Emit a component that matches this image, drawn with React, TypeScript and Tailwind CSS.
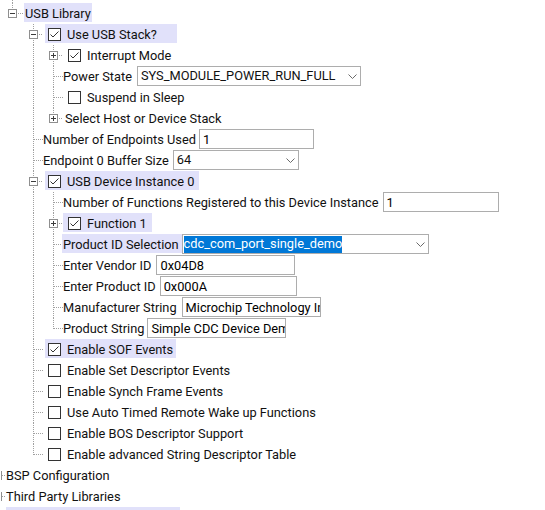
import type { ReactNode } from "react"

type Kind = "pipe" | "blank" | "tee" | "elbow"
type Exp = "plus" | "minus"

const LINE = "#a0a0a0"
const BOX = "#8f8f8f"

// one 21px tall column of the tree gutter (dotted connectors + expander box)
function Cell({ kind, first, exp }: { kind: Kind; first?: boolean; exp?: Exp }) {
  const w = first ? 23 : 20
  const c = first ? 12.5 : 10.5
  return (
    <svg width={w} height={21} className="block shrink-0" shapeRendering="crispEdges">
      {(kind === "pipe" || kind === "tee") && (
        <line x1={c} y1={0} x2={c} y2={21} stroke={LINE} strokeDasharray="1 1" />
      )}
      {kind === "elbow" && <line x1={c} y1={0} x2={c} y2={11} stroke={LINE} strokeDasharray="1 1" />}
      {(kind === "tee" || kind === "elbow") && (
        <line x1={exp ? c + 5 : c} y1={10.5} x2={w} y2={10.5} stroke={LINE} strokeDasharray="1 1" />
      )}
      {exp && (
        <g>
          <rect x={c - 4} y={6.5} width={8} height={8} fill="#fff" stroke={BOX} />
          <line x1={c - 2.5} y1={10.5} x2={c + 2.5} y2={10.5} stroke="#3c3c3c" />
          {exp === "plus" && <line x1={c} y1={8} x2={c} y2={13} stroke="#3c3c3c" />}
        </g>
      )}
    </svg>
  )
}

function Check({ on }: { on: boolean }) {
  return (
    <svg width={13} height={13} className="block shrink-0" shapeRendering="crispEdges">
      <rect x={0.5} y={0.5} width={12} height={12} fill="#fff" stroke="#333" />
      {on && (
        <polyline
          points="2.5,6.5 5,9 10.5,3.5"
          fill="none"
          stroke="#333"
          strokeWidth={1}
          shapeRendering="geometricPrecision"
        />
      )}
    </svg>
  )
}

function Chevron() {
  return (
    <svg width={9} height={5} className="block shrink-0">
      <polyline points="0.5,0.5 4.5,4.5 8.5,0.5" fill="none" stroke="#6b6b6b" />
    </svg>
  )
}

function Field({ value, w }: { value: string; w: string }) {
  return (
    <input
      readOnly
      value={value}
      className={`${w} h-[20px] shrink-0 border border-[#adadad] bg-white pl-[3px] text-black outline-none`}
    />
  )
}

function Combo({ value, w, selected }: { value: string; w: string; selected?: boolean }) {
  return (
    <div
      className={`${w} flex h-[20px] shrink-0 items-center justify-between border border-[#adadad] bg-white pl-[1px] pr-[3px]`}
    >
      {selected ? (
        <span className="flex h-[17px] items-center bg-[#0078d7] text-white">{value}</span>
      ) : (
        <span className="pl-[2px]">{value}</span>
      )}
      <Chevron />
    </div>
  )
}

type Row = {
  cols?: Kind[]
  root?: boolean
  exp?: Exp
  check?: boolean
  label: string
  hl?: boolean
  pad: string
  control?: ReactNode
}

const rows: Row[] = [
  { cols: ["elbow"], exp: "minus", label: "USB Library", hl: true, pad: "ml-[1px] pl-[1px] pr-[1px]" },
  { cols: ["blank", "tee"], exp: "minus", check: true, label: "Use USB Stack?", hl: true, pad: "ml-[2px] pl-[3px] pr-[20px]" },
  { cols: ["blank", "pipe", "tee"], exp: "plus", check: true, label: "Interrupt Mode", pad: "ml-[2px] pl-[3px] pr-[3px]" },
  {
    cols: ["blank", "pipe", "tee"],
    label: "Power State",
    pad: "pr-[5px]",
    control: <Combo value="SYS_MODULE_POWER_RUN_FULL" w="w-[224px]" />,
  },
  { cols: ["blank", "pipe", "tee"], check: false, label: "Suspend in Sleep", pad: "ml-[2px] pl-[3px] pr-[3px]" },
  { cols: ["blank", "pipe", "elbow"], exp: "plus", label: "Select Host or Device Stack", pad: "ml-[1px] pl-[1px] pr-[1px]" },
  {
    cols: ["blank", "tee"],
    label: "Number of Endpoints Used",
    pad: "pr-[3px]",
    control: <Field value="1" w="w-[115px]" />,
  },
  {
    cols: ["blank", "tee"],
    label: "Endpoint 0 Buffer Size",
    pad: "pr-[4px]",
    control: <Combo value="64" w="w-[126px]" />,
  },
  { cols: ["blank", "tee"], exp: "minus", check: true, label: "USB Device Instance 0", hl: true, pad: "ml-[2px] pl-[3px] pr-[5px]" },
  {
    cols: ["blank", "pipe", "tee"],
    label: "Number of Functions Registered to this Device Instance",
    pad: "pr-[4px]",
    control: <Field value="1" w="w-[116px]" />,
  },
  { cols: ["blank", "pipe", "tee"], exp: "plus", check: true, label: "Function 1", hl: true, pad: "pl-[5px] pr-[5px]" },
  {
    cols: ["blank", "pipe", "tee"],
    label: "Product ID Selection",
    hl: true,
    pad: "-ml-[1px] pl-[1px] pr-[3px]",
    control: <Combo value="cdc_com_port_single_demo" w="w-[247px]" selected />,
  },
  {
    cols: ["blank", "pipe", "tee"],
    label: "Enter Vendor ID",
    pad: "pr-[5px]",
    control: <Field value="0x04D8" w="w-[139px]" />,
  },
  {
    cols: ["blank", "pipe", "tee"],
    label: "Enter Product ID",
    pad: "pr-[4px]",
    control: <Field value="0x000A" w="w-[137px]" />,
  },
  {
    cols: ["blank", "pipe", "tee"],
    label: "Manufacturer String",
    pad: "pr-[5px]",
    control: <Field value="Microchip Technology Inc." w="w-[139px]" />,
  },
  {
    cols: ["blank", "pipe", "elbow"],
    label: "Product String",
    pad: "pr-[3px]",
    control: <Field value="Simple CDC Device Demo" w="w-[139px]" />,
  },
  { cols: ["blank", "tee"], check: true, label: "Enable SOF Events", hl: true, pad: "ml-[2px] pl-[3px] pr-[3px]" },
  { cols: ["blank", "tee"], check: false, label: "Enable Set Descriptor Events", pad: "ml-[2px] pl-[3px] pr-[3px]" },
  { cols: ["blank", "tee"], check: false, label: "Enable Synch Frame Events", pad: "ml-[2px] pl-[3px] pr-[3px]" },
  { cols: ["blank", "tee"], check: false, label: "Use Auto Timed Remote Wake up Functions", pad: "ml-[2px] pl-[3px] pr-[3px]" },
  { cols: ["blank", "tee"], check: false, label: "Enable BOS Descriptor Support", pad: "ml-[2px] pl-[3px] pr-[3px]" },
  { cols: ["blank", "elbow"], check: false, label: "Enable advanced String Descriptor Table", pad: "ml-[2px] pl-[3px] pr-[3px]" },
  { root: true, label: "BSP Configuration", pad: "pr-[1px]" },
  { root: true, label: "Third Party Libraries", pad: "pr-[1px]" },
]

function RootStub() {
  // the expander of top level nodes sits just off the left edge; only its right side shows
  return (
    <svg width={6} height={21} className="block shrink-0" shapeRendering="crispEdges">
      <line x1={1.5} y1={6} x2={1.5} y2={15} stroke={BOX} />
      <line x1={2} y1={10.5} x2={6} y2={10.5} stroke={LINE} strokeDasharray="1 1" />
    </svg>
  )
}

function TreeRow({ row }: { row: Row }) {
  const cols = row.cols ?? []
  return (
    <div className="flex h-[21px] items-start">
      {row.root && <RootStub />}
      {cols.map((k, i) => (
        <Cell key={i} kind={k} first={i === 0} exp={i === cols.length - 1 ? row.exp : undefined} />
      ))}
      <span
        className={`flex h-[19px] shrink-0 items-center whitespace-nowrap pt-[2px] ${row.pad} ${row.hl ? "bg-[#e1e1fa]" : ""}`}
      >
        {row.check !== undefined && <Check on={row.check} />}
        <span className={row.check !== undefined ? "ml-[6px]" : ""}>{row.label}</span>
      </span>
      {row.control}
    </div>
  )
}

export default function App() {
  return (
    <div className="h-[510px] w-full overflow-hidden bg-white font-[Roboto,sans-serif] text-[12.8px] text-[#111]">
      <svg width={23} height={3} className="block" shapeRendering="crispEdges">
        <line x1={12.5} y1={0} x2={12.5} y2={3} stroke={LINE} strokeDasharray="1 1" />
      </svg>
      {rows.map((r, i) => (
        <TreeRow key={i} row={r} />
      ))}
      <div className="flex h-[21px] items-start pl-[6px]">
        <span className="h-[19px] w-[174px] bg-[#e1e1fa]" />
      </div>
    </div>
  )
}
